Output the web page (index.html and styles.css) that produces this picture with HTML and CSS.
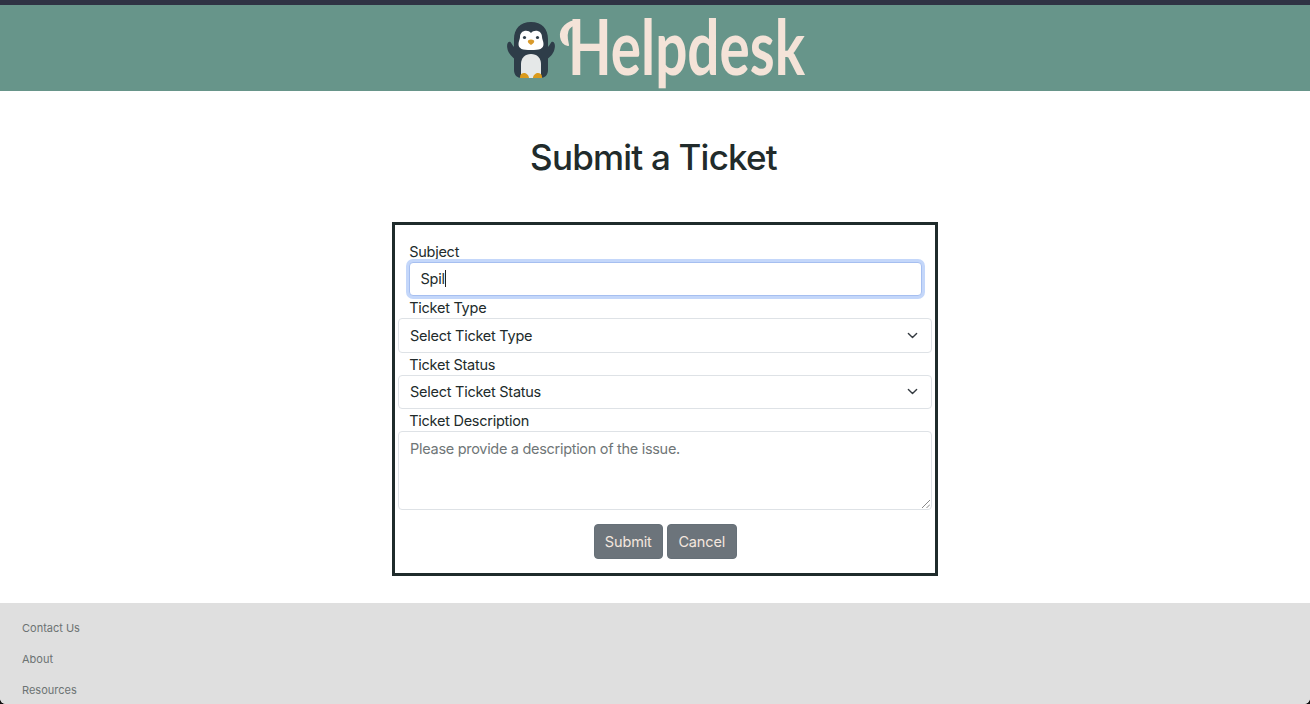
FILE: index.html
```html
<!DOCTYPE html>
<html lang="en">
<head>
<meta charset="utf-8">
<title>Helpdesk</title>
<link rel="stylesheet" href="styles.css">
</head>
<body>
<div class="page">
  <header class="header">
    <svg class="penguin" viewBox="0 0 48 58" aria-hidden="true">
      <path fill="#2e3d49" d="M24 0C13 0 7 7 7 17v8C6 24 5 22 3.500 20 1 19-.5 22 .3 26 1 31 4 34 7 36.500V48c0 5 3 8 8 8h18c5 0 8-3 8-8V36.500c3-2.500 6-5.500 6.700-10.500.8-4-.7-7-3.200-6-1.500 2-2.500 4-3.500 5v-8C41 7 35 0 24 0z"/>
      <path fill="#fff" d="M24 11c-3-4-11-3-11 4 0 2-1.500 4-1.500 7 0 5 4 6 12.500 6s12.500-1 12.500-6c0-3-1.500-5-1.500-7 0-7-8-8-11-4z"/>
      <path fill="#e5e8e8" d="M24 32c-6 0-10 4-10 10v14h20V42c0-6-4-10-10-10z"/>
      <circle cx="17.500" cy="15.500" r="1.600" fill="#2e3d49"/><circle cx="30.500" cy="15.500" r="1.600" fill="#2e3d49"/>
      <path fill="#d99a2b" d="M21 18.500q3-2 6 0 1 2-3 4.500-4-2.500-3-4.500z"/>
      <path fill="#d99a1c" d="M13 55c0-3 2-4 4-4s5 2 5 5H13zM35 55c0-3-2-4-4-4s-5 2-5 5h9z"/>
    </svg>
    <svg class="wordmark" viewBox="0 0 246 86">
      <path class="flourish" d="M18 16C7 16 0 24 1 32q1 7 7 8Q5 28 9 23q4-4 9-4z"/>
      <text class="wordmark-text" x="8" y="70" textLength="237" lengthAdjust="spacingAndGlyphs">Helpdesk</text>
    </svg>
  </header>
  <main class="main">
    <h1 class="title">Submit a Ticket</h1>
    <form class="ticket">
      <div class="label">Subject</div>
      <div class="control focused">Spil<span class="caret"></span></div>
      <div class="label">Ticket Type</div>
      <div class="control select">Select Ticket Type<svg class="chevron" viewBox="0 0 16 16"><path d="m2 5 6 6 6-6"/></svg></div>
      <div class="label">Ticket Status</div>
      <div class="control select">Select Ticket Status<svg class="chevron" viewBox="0 0 16 16"><path d="m2 5 6 6 6-6"/></svg></div>
      <div class="label">Ticket Description</div>
      <div class="control area">Please provide a description of the issue.<svg class="grip" viewBox="0 0 8 8"><path d="M0 8 8 0M4.500 8 8 4.500"/></svg></div>
      <div class="actions"><button type="button" class="btn">Submit</button><button type="button" class="btn">Cancel</button></div>
    </form>
  </main>
  <footer class="footer">
    <a class="link">Contact Us</a>
    <a class="link">About</a>
    <a class="link">Resources</a>
  </footer>
</div>
</body>
</html>
```
FILE: styles.css
```css
* { box-sizing: border-box; }
body { margin: 0; background: #111; font-family: Inter, "Liberation Sans", sans-serif; color: #212b2b; }
.page { height: 704px; display: flex; flex-direction: column; overflow: hidden; background: #fff; border-radius: 0 0 6px 6px; }
.header { height: 91px; flex: none; display: flex; align-items: flex-start; gap: 5px; padding-left: 507px; background: #67958a; border-top: 5px solid #2f3344; }
.penguin { width: 48px; height: 58px; margin-top: 17px; }
.wordmark { width: 246px; height: 86px; overflow: visible; }
.wordmark-text { font: 700 76px Lato, sans-serif; fill: #f4e3d8; }
.flourish { fill: #f4e3d8; stroke: #f4e3d8; stroke-width: 2; stroke-linejoin: round; }
.main { height: 512px; flex: none; }
.title { margin: 44px 0 43px; padding-right: 3px; text-align: center; font-size: 35px; line-height: 44px; font-weight: 500; letter-spacing: -0.800px; }
.ticket { width: 546px; height: 354px; margin-left: 392px; padding: 14.600px 3.400px 0; border: 3px solid #1f2b2b; font-size: 14.500px; letter-spacing: -0.260px; }
.label { height: 22px; line-height: 23px; padding-left: 10.800px; }
.control { position: relative; display: flex; align-items: center; height: 34.500px; padding: 0 10.700px; background: #fff; border: 1px solid #dee2e6; border-radius: 4px; }
.focused { width: 513px; margin-left: 10.500px; border-color: #a6bff0; box-shadow: 0 0 0 3px #c4d7fa; }
.caret { width: 1px; height: 17px; background: #222; }
.select { justify-content: space-between; padding-right: 13px; }
.chevron { width: 11px; height: 11px; fill: none; stroke: #343a40; stroke-width: 2; stroke-linecap: round; stroke-linejoin: round; }
.area { height: 78.500px; align-items: flex-start; padding-top: 6px; line-height: 22px; color: #6f7677; letter-spacing: -0.300px; }
.grip { position: absolute; right: 1px; bottom: 1px; width: 8px; height: 8px; fill: none; stroke: #888; }
.actions { display: flex; justify-content: center; gap: 4px; padding-top: 14.400px; }
.btn { height: 35px; width: 69.500px; padding: 0; border: 1px solid #667078; border-radius: 4px; background: #6c747b; color: #f4e7df; font: 14.500px Inter, sans-serif; letter-spacing: -0.150px; }
.footer { flex: 1; display: flex; flex-direction: column; gap: 15px; padding: 17px 22px 0; background: #dfdfdf; }
.link { height: 16px; flex: none; line-height: 16px; font-size: 11px; color: #6c7373; }
```
